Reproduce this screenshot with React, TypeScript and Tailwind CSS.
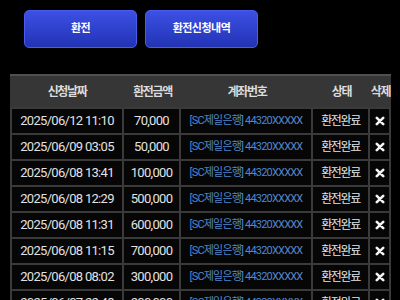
const ROWS = [
  { date: '2025/06/12 11:10', amount: '70,000' },
  { date: '2025/06/09 03:05', amount: '50,000' },
  { date: '2025/06/08 13:41', amount: '100,000' },
  { date: '2025/06/08 12:29', amount: '500,000' },
  { date: '2025/06/08 11:31', amount: '600,000' },
  { date: '2025/06/08 11:15', amount: '700,000' },
  { date: '2025/06/08 08:02', amount: '300,000' },
  { date: '2025/06/07 22:48', amount: '200,000' },
]

const COLS = 'grid grid-cols-[114px_57px_132px_57px_21px]'
const FONT = "font-['Roboto','Noto_Sans_CJK_KR',sans-serif]"

function CloseMark() {
  return (
    <svg width="10" height="10" viewBox="0 0 10 10">
      <path d="M1.8 1.8 L8.2 8.2 M8.2 1.8 L1.8 8.2" stroke="#f2f2f2" strokeWidth="2.6" strokeLinecap="round" />
    </svg>
  )
}

export default function App() {
  return (
    <div className={`w-[400px] h-[300px] overflow-hidden bg-black ${FONT}`}>
      {/* Tabs */}
      <div className="flex gap-2 pl-6 pt-2.5">
        {['환전', '환전신청내역'].map(label => (
          <button
            key={label}
            className="w-[113px] h-[38px] rounded-[5px] border border-[#4a5cf0] bg-gradient-to-b from-[#3c50e4] to-[#2233b4] text-[11px] font-bold tracking-[-0.5px] text-white shadow-[0_1px_2px_rgba(0,0,0,0.6)]"
          >
            {label}
          </button>
        ))}
      </div>

      {/* History table */}
      <div className="mt-[26px] ml-2.5 w-[381px]">
        <div className={`${COLS} h-[35px] bg-[#363636] border-t-2 border-t-[#505050] border-b-2 border-b-[#3a3a3a] text-[12px] font-bold tracking-[-1.4px] text-[#dcdcdc]`}>
          <div className="flex items-center justify-center">신청날짜</div>
          <div className="flex items-center justify-center">환전금액</div>
          <div className="flex items-center justify-center">계좌번호</div>
          <div className="flex items-center justify-center">상태</div>
          <div className="flex items-center justify-center whitespace-nowrap">삭제</div>
        </div>

        {ROWS.map(row => (
          <div key={row.date} className={`${COLS} h-[26px] bg-[#060606]`}>
            <div className="flex items-center justify-center border-l-2 border-r-2 border-b-2 border-[#3a3a3a] text-[13px] tracking-[-0.7px] text-[#e2e2e2]">
              {row.date}
            </div>
            <div className="flex items-center justify-center border-r-2 border-b-2 border-[#3a3a3a] text-[13px] tracking-[-0.7px] text-[#e2e2e2]">
              {row.amount}
            </div>
            <div className="flex items-center justify-center border-r-2 border-b-2 border-[#3a3a3a] text-[11px] tracking-[-0.8px] text-[#4f86cf] whitespace-nowrap">
              [SC제일은행] 44320XXXXX
            </div>
            <div className="flex items-center justify-center border-r-2 border-b-2 border-[#3a3a3a] text-[12px] tracking-[-1.4px] text-[#e6e6e6]">
              환전완료
            </div>
            <div className="flex items-center justify-center border-r-2 border-b-2 border-[#3a3a3a]">
              <CloseMark />
            </div>
          </div>
        ))}
      </div>
    </div>
  )
}
